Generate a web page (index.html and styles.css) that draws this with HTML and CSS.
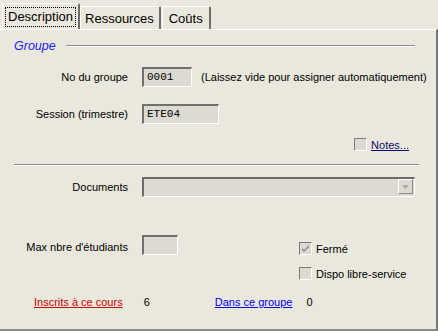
FILE: index.html
```html
<!DOCTYPE html>
<html lang="fr">
<head>
    <meta charset="UTF-8">
    <title>Groupe</title>
    <link rel="stylesheet" href="styles.css">
</head>
<body>
    <div class="window">
        <div class="tabs">
            <div class="tab active"><span class="focus">Description</span></div>
            <div class="tab">Ressources</div>
            <div class="tab tab-last">Coûts</div>
        </div>
        <div class="panel">
            <div class="legend">
                <span class="legend-title">Groupe</span>
                <span class="legend-line"></span>
            </div>

            <div class="row row-num">
                <label class="label">No du groupe</label>
                <div class="field field-num">0001</div>
                <span class="hint">(Laissez vide pour assigner automatiquement)</span>
            </div>

            <div class="row row-session">
                <label class="label">Session (trimestre)</label>
                <div class="field field-session">ETE04</div>
            </div>

            <div class="notes-row">
                <span class="check"></span>
                <a class="link notes">Notes...</a>
            </div>

            <div class="separator"></div>

            <div class="row row-docs">
                <label class="label">Documents</label>
                <div class="select">
                    <span class="select-btn">
                        <svg width="7" height="4" viewBox="0 0 7 4"><path d="M0 0h7L3.5 4z" fill="#a8a8a8"/></svg>
                    </span>
                </div>
            </div>

            <div class="row row-max">
                <label class="label">Max nbre d'étudiants</label>
                <div class="field field-max"></div>
                <div class="options">
                    <div class="option">
                        <span class="check">
                            <svg width="9" height="9" viewBox="0 0 9 9"><path d="M1 4l2 2 5-5v2L3 8 1 6z" fill="#8c8c8c"/></svg>
                        </span>
                        <span>Fermé</span>
                    </div>
                    <div class="option">
                        <span class="check"></span>
                        <span>Dispo libre-service</span>
                    </div>
                </div>
            </div>

            <div class="counts">
                <a class="link red">Inscrits à ce cours</a>
                <span class="count">6</span>
                <a class="link blue">Dans ce groupe</a>
                <span class="count">0</span>
            </div>
        </div>
    </div>
</body>
</html>
```

FILE: styles.css
```css
body {
    margin: 0;
    font-family: "Liberation Sans", Arial, sans-serif;
    font-size: 11px;
    color: #000;
}

.window {
    width: 438px;
    height: 331px;
    background: #eae8dc;
    display: flex;
    flex-direction: column;
    box-sizing: border-box;
}

/* tabs */
.tabs {
    display: flex;
    align-items: flex-end;
    height: 29px;
    padding-left: 2px;
}

.tab {
    height: 22px;
    padding: 0 5px 0 4px;
    display: flex;
    align-items: center;
    font-size: 13px;
    color: #000;
    border-top: 1px solid #fff;
    border-left: 1px solid #fff;
    border-right: 2px solid #6e6e6e;
    border-top-left-radius: 2px;
    border-top-right-radius: 2px;
    margin-right: 1px;
}

.tab.active {
    height: 25px;
    padding: 0 2px;
    margin-right: 0;
}

.tab-last {
    padding: 0 6px;
}

.focus {
    border: 1px dotted #000;
    padding: 1px 2px 2px;
    line-height: 15px;
}

/* panel */
.panel {
    flex: 1;
    border-top: 1px solid #fff;
    border-right: 2px solid #777;
    border-bottom: 2px solid #8a8a8a;
    padding-top: 8px;
}

.legend {
    display: flex;
    align-items: center;
    height: 16px;
    padding-left: 14px;
    padding-right: 21px;
}

.legend-title {
    color: #1a1aff;
    font-style: italic;
    font-size: 12.5px;
}

.legend-line {
    flex: 1;
    margin-left: 10px;
    height: 1px;
    background: #8c8c8c;
    border-bottom: 1px solid #fff;
}

.row {
    display: flex;
    align-items: center;
}

.label {
    width: 128px;
    text-align: right;
    margin-right: 14px;
}

.field {
    height: 20px;
    box-sizing: border-box;
    background: #dcdad1;
    border-top: 2px solid #707070;
    border-left: 2px solid #707070;
    border-right: 1px solid #fff;
    border-bottom: 1px solid #fff;
    font-family: "Liberation Mono", "Courier New", monospace;
    font-size: 11px;
    line-height: 16px;
    padding-left: 3px;
}

.row-num {
    margin-top: 13px;
}

.field-num {
    width: 50px;
}

.hint {
    margin-left: 9px;
}

.row-session {
    margin-top: 17px;
}

.field-session {
    width: 77px;
}

.notes-row {
    display: flex;
    align-items: center;
    justify-content: flex-end;
    margin-top: 14px;
    padding-right: 27px;
    height: 13px;
}

.check {
    width: 13px;
    height: 13px;
    box-sizing: border-box;
    background: #dcdad1;
    border-top: 1px solid #7a7a7a;
    border-left: 1px solid #7a7a7a;
    border-right: 1px solid #fff;
    border-bottom: 1px solid #fff;
    display: inline-flex;
    align-items: center;
    justify-content: center;
    margin-right: 4px;
}

.link {
    text-decoration: underline;
}

.notes {
    color: #0a0a70;
}

.separator {
    margin: 13px 17px 0 14px;
    height: 1px;
    background: #8c8c8c;
    border-bottom: 1px solid #fff;
}

.row-docs {
    margin-top: 11px;
}

.select {
    width: 273px;
    height: 20px;
    box-sizing: border-box;
    background: #dcdad1;
    border-top: 2px solid #6a6a6a;
    border-left: 2px solid #6a6a6a;
    border-right: 1px solid #fff;
    border-bottom: 1px solid #fff;
    display: flex;
    justify-content: flex-end;
}

.select-btn {
    width: 15px;
    height: 15px;
    margin: 0 1px 0 0;
    box-sizing: border-box;
    border-top: 1px solid #fff;
    border-left: 1px solid #fff;
    border-right: 1px solid #8a8a8a;
    border-bottom: 1px solid #8a8a8a;
    display: flex;
    align-items: center;
    justify-content: center;
}

.row-max {
    margin-top: 38px;
    align-items: flex-start;
}

.row-max .label {
    margin-top: 6px;
}

.field-max {
    width: 36px;
}

.options {
    margin-left: 121px;
    margin-top: 7px;
    display: flex;
    flex-direction: column;
    gap: 12px;
}

.option {
    display: flex;
    align-items: center;
}

.option .check {
    margin-right: 4px;
}

.counts {
    display: flex;
    align-items: center;
    margin-top: 16px;
    padding-left: 34px;
}

.red {
    color: #c80000;
}

.blue {
    color: #0000ee;
}

.count {
    margin-left: 21px;
    margin-right: 65px;
}

.counts .count:last-child {
    margin-left: 14px;
}
```
